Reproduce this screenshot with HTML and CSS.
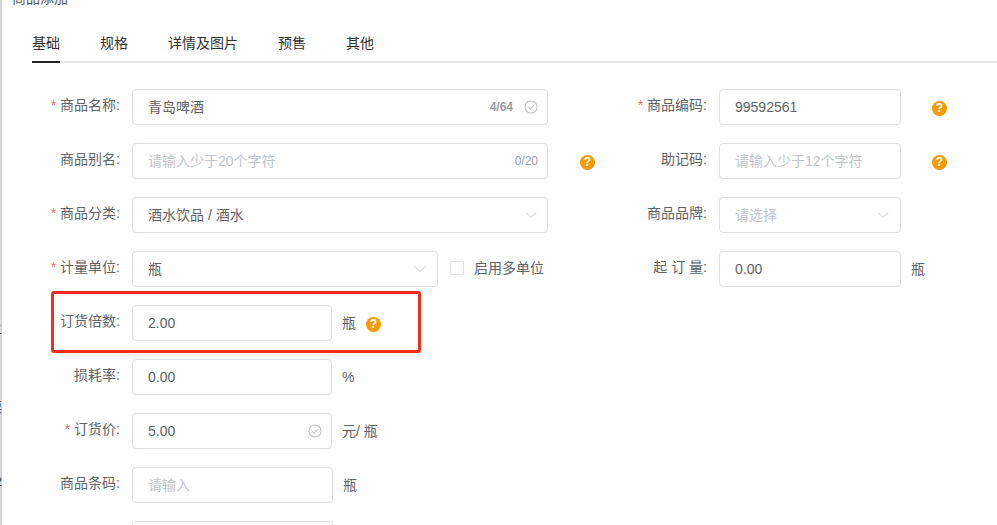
FILE: index.html
```html
<!DOCTYPE html>
<html lang="zh-CN">
<head>
    <meta charset="UTF-8">
    <meta name="viewport" content="width=device-width, initial-scale=1.0">
    <title>商品添加</title>
    <link rel="stylesheet" href="styles.css">
</head>
<body>
    <div class="backdrop">
        <span class="backdrop-mark mark-a">二</span>
        <span class="backdrop-mark mark-b">票</span>
        <span class="backdrop-mark mark-c">2</span>
    </div>

    <div class="dialog">
        <h1 class="dialog-title">商品添加</h1>

        <div class="tabs">
            <a class="tab active">基础</a>
            <a class="tab">规格</a>
            <a class="tab">详情及图片</a>
            <a class="tab">预售</a>
            <a class="tab">其他</a>
        </div>

        <div class="form-grid">
            <!-- row 1 -->
            <div class="field">
                <label class="label"><i>*</i>商品名称:</label>
                <div class="box w-wide">
                    <input class="cn" value="青岛啤酒">
                    <span class="count strong">4/64</span>
                    <svg class="ico-check" viewBox="0 0 14 14"><circle cx="7" cy="7" r="6"/><path d="M4.3 7.2l2 2 3.5-3.8"/></svg>
                </div>
            </div>
            <div class="field right">
                <label class="label"><i>*</i>商品编码:</label>
                <div class="box w-right"><input value="99592561"></div>
                <span class="help far">?</span>
            </div>

            <!-- row 2 -->
            <div class="field">
                <label class="label">商品别名:</label>
                <div class="box w-wide">
                    <input placeholder="请输入少于20个字符">
                    <span class="count flush">0/20</span>
                </div>
                <span class="help far wider">?</span>
            </div>
            <div class="field right">
                <label class="label">助记码:</label>
                <div class="box w-right"><input placeholder="请输入少于12个字符"></div>
                <span class="help far">?</span>
            </div>

            <!-- row 3 -->
            <div class="field">
                <label class="label"><i>*</i>商品分类:</label>
                <div class="box w-wide">
                    <input class="cn" value="酒水饮品 / 酒水">
                    <svg class="ico-arrow" viewBox="0 0 12 8"><path d="M1 1.5l5 5 5-5"/></svg>
                </div>
            </div>
            <div class="field right">
                <label class="label">商品品牌:</label>
                <div class="box w-right">
                    <input placeholder="请选择">
                    <svg class="ico-arrow" viewBox="0 0 12 8"><path d="M1 1.5l5 5 5-5"/></svg>
                </div>
            </div>

            <!-- row 4 -->
            <div class="field">
                <label class="label"><i>*</i>计量单位:</label>
                <div class="box w-mid">
                    <input class="cn" value="瓶">
                    <svg class="ico-arrow" viewBox="0 0 12 8"><path d="M1 1.5l5 5 5-5"/></svg>
                </div>
                <span class="checkbox"></span>
                <span class="checkbox-text">启用多单位</span>
            </div>
            <div class="field right">
                <label class="label">起 订 量:</label>
                <div class="box w-right"><input value="0.00"></div>
                <span class="unit">瓶</span>
            </div>

            <!-- left column only from here -->
            <div class="field full highlighted">
                <label class="label">订货倍数:</label>
                <div class="box w-short"><input value="2.00"></div>
                <span class="unit">瓶</span>
                <span class="help near">?</span>
            </div>

            <div class="field full">
                <label class="label">损耗率:</label>
                <div class="box w-short"><input value="0.00"></div>
                <span class="unit percent">%</span>
            </div>

            <div class="field full">
                <label class="label"><i>*</i>订货价:</label>
                <div class="box w-short">
                    <input value="5.00">
                    <svg class="ico-check" viewBox="0 0 14 14"><circle cx="7" cy="7" r="6"/><path d="M4.3 7.2l2 2 3.5-3.8"/></svg>
                </div>
                <span class="unit">元/ 瓶</span>
            </div>

            <div class="field full">
                <label class="label">商品条码:</label>
                <div class="box w-short plus"><input placeholder="请输入"></div>
                <span class="unit">瓶</span>
            </div>

            <div class="field full">
                <label class="label"></label>
                <div class="box w-short plus"><input></div>
            </div>
        </div>
    </div>
</body>
</html>
```

FILE: styles.css
```css
html, body {
    height: 100%;
}
body {
    margin: 0;
    overflow: hidden;
    display: flex;
    background-color: #fff;
    font-family: "Liberation Sans", "Noto Sans CJK SC", sans-serif;
    font-size: 14px;
    color: #606266;
}
.backdrop {
    position: relative;
    flex: 0 0 2px;
    background-color: #d5d5d5;
    overflow: hidden;
}
.backdrop-mark {
    position: absolute;
    right: 0;
    font-size: 13px;
    line-height: 16px;
    color: #444;
}
.mark-a { top: 322px; }
.mark-b { top: 400px; }
.mark-c { top: 474px; }

.dialog {
    flex: 1;
    min-width: 0;
    height: 100vh;
    overflow: hidden;
}
.dialog-title {
    margin: -9px 0 0 10px;
    font-size: 14px;
    font-weight: normal;
    line-height: 15px;
    color: #555;
}

.tabs {
    display: flex;
    gap: 40px;
    margin: 15px 0 26px 30px;
    border-bottom: 2px solid #e4e7ed;
}
.tab {
    height: 40px;
    margin-bottom: -2px;
    line-height: 44px;
    color: #303133;
}
.tab.active {
    border-bottom: 2px solid #222;
}

.form-grid {
    display: grid;
    grid-template-columns: 598px 1fr;
    row-gap: 18px;
}
.field {
    display: flex;
    align-items: center;
    height: 36px;
}
.field.full {
    grid-column: 1;
}
.label {
    flex: 0 0 118px;
    margin-right: 12px;
    padding-bottom: 6px;
    text-align: right;
    white-space: pre;
}
.right .label {
    flex-basis: 107px;
}
.label i {
    margin-right: 4px;
    font-style: normal;
    color: #f56c6c;
}

.box {
    box-sizing: border-box;
    display: flex;
    align-items: center;
    height: 36px;
    padding: 0 10px 0 15px;
    border: 1px solid #dcdfe6;
    border-radius: 4px;
    background-color: #fff;
}
.box input {
    flex: 1;
    min-width: 0;
    padding: 0;
    border: none;
    outline: none;
    background: none;
    font: inherit;
    color: #606266;
}
.box input.cn {
    padding-bottom: 2px;
}
.box input::placeholder {
    color: #c0c4cc;
}
.w-wide { width: 416px; padding-right: 9px; }
.w-mid { width: 306px; }
.w-short { width: 200px; padding-right: 9px; }
.w-short.plus { width: 201px; }
.w-right { width: 182px; }

.count {
    font-size: 12px;
    color: #9a9ca3;
}
.count.strong {
    margin-right: 10px;
    font-weight: bold;
}
.ico-check {
    width: 14px;
    height: 14px;
    margin-left: 1px;
    fill: none;
    stroke: #c0c4cc;
    stroke-width: 1.1;
}
.ico-arrow {
    width: 12px;
    height: 8px;
    margin-right: 1px;
    fill: none;
    stroke: #c0c4cc;
    stroke-width: 1;
}

.unit {
    margin-left: 10px;
    padding-bottom: 2px;
}
.unit.percent {
    padding-bottom: 0;
}
.help {
    flex: 0 0 15px;
    height: 15px;
    margin-top: 2px;
    border-radius: 50%;
    background-color: #f59a00;
    color: #fff;
    font-size: 12px;
    font-weight: bold;
    line-height: 15px;
    text-align: center;
}
.help.far {
    margin-left: 31px;
}
.help.far.wider {
    margin-left: 32px;
}
.help.near {
    margin-left: 10px;
}

.checkbox {
    box-sizing: border-box;
    width: 14px;
    height: 14px;
    margin: 0 10px 3px 12px;
    border: 1px solid #dcdfe6;
    border-radius: 2px;
}
.checkbox-text {
    padding-bottom: 4px;
}

/* red annotation drawn over the screenshot */
.highlighted {
    position: relative;
}
.highlighted::after {
    content: "";
    position: absolute;
    left: 49px;
    top: -14px;
    width: 364px;
    height: 56px;
    border: 3px solid #ff2a1f;
    border-radius: 3px;
    pointer-events: none;
}
```
